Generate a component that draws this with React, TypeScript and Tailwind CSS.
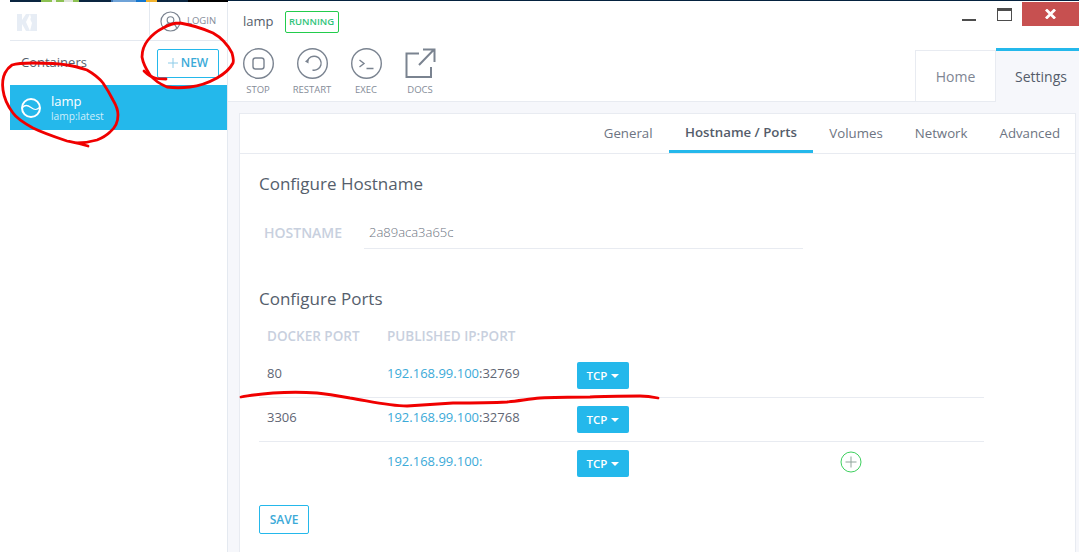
const font = { fontFamily: '"Open Sans", sans-serif' };

function Tcp() {
  return (
    <button className="flex h-[27px] w-[52px] items-center justify-center gap-[4px] rounded-[2px] bg-[#24b8eb] text-[11.5px] font-semibold text-white">
      TCP
      <span className="h-0 w-0 border-x-[4px] border-t-[4px] border-x-transparent border-t-white" />
    </button>
  );
}

function Row({ port, ip, last, plus }: { port: string; ip: string; last?: boolean; plus?: boolean }) {
  return (
    <div className={`flex h-[44px] items-start pl-[8px] pt-[8px] ${last ? "" : "border-b border-[#e8ebf1]"}`}>
      <div className="w-[120px] pt-[2px] text-[13px] leading-[18px] text-[#5f6674]">{port}</div>
      <div className="w-[190px] pt-[2px] text-[13px] leading-[18px] text-[#5f6674]">
        <span className="text-[#3baad8]">192.168.99.100</span>
        <span className={port ? "" : "text-[#3baad8]"}>:{ip}</span>
      </div>
      <Tcp />
      {plus && (
        <svg className="ml-[211px] mt-[1px]" width="22" height="22" viewBox="0 0 22 22" fill="none">
          <circle cx="11" cy="11" r="10" stroke="#3fd05f" />
          <path d="M11 5.5v11M5.500 11h11" stroke="#8fa39a" />
        </svg>
      )}
    </div>
  );
}

function Action({ label, children }: { label: string; children: React.ReactNode }) {
  return (
    <div className="flex w-[54px] flex-col items-center">
      <svg width="31" height="31" viewBox="0 0 31 31" fill="none" stroke="#7a8390" strokeWidth="1.4">
        {children}
      </svg>
      <span className="mt-[4px] text-[9.5px] leading-[14px] text-[#858c98]">{label}</span>
    </div>
  );
}

export default function App() {
  return (
    <div style={font} className="relative h-[552px] w-[1079px] overflow-hidden bg-white">
      <div className="flex h-[2px] items-start">
        <div className="ml-[10px] h-full w-[31px] bg-[#0a2540]" />
        <div className="h-full w-[11px] bg-[#8cc152]" />
        <div className="h-full w-[4px] bg-[#eef0e8]" />
        <div className="h-full w-[8px] bg-[#8cc152]" />
        <div className="h-full w-[9px] bg-[#dfe3da]" />
        <div className="h-full w-[6px] bg-[#8cc152]" />
        <div className="h-full w-[32px] bg-[#0a2540]" />
        <div className="h-full w-[2px] bg-[#3f78b5]" />
        <div className="h-full w-[23px] bg-[#6fa3d8]" />
        <div className="h-full w-[10px] bg-[#1577cf]" />
        <div className="h-full w-[11px] bg-[#f2b32e]" />
        <div className="h-full w-[31px] bg-[#0a2540]" />
        <div className="h-full w-[40px] bg-[#000000]" />
        <div className="h-[1px] flex-1 bg-[#05223f]" />
      </div>
      <div className="flex h-[550px]">
        {/* Sidebar */}
        <aside className="flex w-[228px] shrink-0 flex-col border-r border-[#e4e9f0]">
          <div className="ml-[10px] flex h-[39px] items-center justify-between border-b border-[#e4e9f0]">
            <svg className="ml-[7px] mt-[2px]" width="20" height="17" viewBox="0 0 20 17" fill="#e7edf5">
              <path d="M0 0h5v6l4-6h4l-4 8 4 9H9L5 10v7H0z" />
              <path d="M13 0h7v17h-7l1.500-6 .5-2-1-2c-.5-1-1-2 0-3.500z" />
            </svg>
            <div className="flex h-full w-[78px] items-center gap-[6px] border-l border-[#e4e9f0] pl-[10px]">
              <svg width="21" height="21" viewBox="0 0 22 22" fill="none" stroke="#7a8390" strokeWidth="1.2">
                <circle cx="11" cy="11" r="10" />
                <circle cx="11" cy="9.500" r="3.500" />
                <path d="M4.500 18c1-3.500 3.500-5 6.500-5s5.500 1.500 6.500 5" />
              </svg>
              <span className="mt-[1px] text-[9.5px] text-[#858c98]">LOGIN</span>
            </div>
          </div>
          <div className="flex h-[44px] items-center justify-between pl-[21px] pr-[8px]">
            <span className="-mt-[1px] text-[13px] text-[#555e6c]">Containers</span>
            <button className="flex h-[29px] w-[62px] items-center justify-center gap-[3px] rounded-[2px] border border-[#24b8eb] text-[12px] font-semibold text-[#3baad8]">
              <svg width="10" height="10" viewBox="0 0 10 10" stroke="#8ccbe8" strokeWidth="1">
                <path d="M5 0v10M0 5h10" />
              </svg>
              NEW
            </button>
          </div>
          <div className="ml-[10px] flex h-[45px] items-center bg-[#24b8eb] pl-[11px] text-white">
            <svg width="20" height="20" viewBox="0 0 20 20" fill="none" stroke="white" strokeWidth="2">
              <circle cx="10" cy="10" r="9" />
              <path d="M1.500 9.500c2-2.500 4.500-3 8.500 0s6 2.500 8.500 0" strokeWidth="1.300" />
            </svg>
            <div className="ml-[10px] flex flex-col">
              <span className="text-[13px] font-medium leading-[17px]">lamp</span>
              <span className="text-[10.2px] leading-[13px] text-[#d0eefa]">lamp:latest</span>
            </div>
          </div>
        </aside>

        {/* Main */}
        <main className="flex min-w-0 flex-1 flex-col bg-[#f6f7fb]">
          <header className="flex h-[100px] shrink-0 justify-between border-b border-[#e8ebf1] bg-white">
            <div className="pl-[15px]">
              <div className="flex h-[38px] items-center gap-[11px] pt-[2px]">
                <span className="text-[13px] font-medium text-[#545c6a]">lamp</span>
                <span className="flex h-[22px] w-[54px] items-center justify-center rounded-[2px] border border-[#22cc4c] text-[9.500px] font-semibold text-[#2fc47a]">
                  RUNNING
                </span>
              </div>
              <div className="-ml-[12px] mt-[8px] flex">
                <Action label="STOP">
                  <circle cx="15.500" cy="15.500" r="14.800" />
                  <rect x="10" y="10" width="11" height="11" rx="2.500" />
                </Action>
                <Action label="RESTART">
                  <circle cx="15.500" cy="15.500" r="14.800" />
                  <path d="M10.500 13a7 7 0 1 1 5 9" />
                  <path d="M8 13.500l3.500-3v5z" fill="#7a8390" stroke="none" />
                </Action>
                <Action label="EXEC">
                  <circle cx="15.500" cy="15.500" r="14.800" />
                  <path d="M8.500 12l4.500 3.500L8.500 19M15.500 20.500h7" />
                </Action>
                <Action label="DOCS">
                  <path d="M14 5.500H1.500V29H26V19" strokeWidth="2" />
                  <path d="M14 17L29 1.500M18 1.500H29.500V14" strokeWidth="2" />
                </Action>
              </div>
            </div>
            <div className="flex flex-col items-end">
              <div className="flex">
                <div className="flex h-[20px] items-end pr-[5px]">
                  <span className="mb-[1px] block h-[2px] w-[14px] bg-[#4d4d4d]" />
                </div>
                <div className="ml-[16px] mt-[6px] h-[13px] w-[15px] border border-t-[3px] border-[#4d4d4d]" />
                <div className="ml-[10px] flex h-[24px] w-[57px] items-center justify-center bg-[#c75050]">
                  <svg width="11" height="10" viewBox="0 0 11 10" stroke="white" strokeWidth="2.800">
                    <path d="M1 .5l9 9M10 .5l-9 9" />
                  </svg>
                </div>
              </div>
              <div className="mt-[24px] flex self-stretch">
                <div className="flex h-[52px] w-[81px] items-center justify-center border-x border-t border-[#e8ebf1] text-[14px] font-medium text-[#7e8593]">
                  Home
                </div>
                <div className="-mt-[2px] flex h-[54px] w-[83px] items-center justify-center border-t-[3px] border-[#24b8eb] bg-[#f6f7fb] pl-[7px] text-[14px] font-medium text-[#545c6a]">
                  Settings
                </div>
              </div>
            </div>
          </header>

          <section className="ml-[11px] mr-[3px] mt-[11px] flex-1 border border-b-0 border-[#e8ebf1] bg-white">
            <nav className="-mr-[1px] flex h-[40px] justify-end border-b border-[#e8ebf1] text-[13.25px] text-[#6d7482]">
              <span className="flex items-center px-[16px]">General</span>
              <span className="flex items-center border-b-[3px] border-[#24b8eb] px-[16.5px] pt-[2px] font-semibold text-[#545c6a]">
                Hostname / Ports
              </span>
              <span className="flex items-center px-[16px]">Volumes</span>
              <span className="flex items-center px-[16px]">Network</span>
              <span className="flex items-center px-[16px]">Advanced</span>
            </nav>
            <div className="pl-[19px] pr-[91px]">
              <h2 className="mt-[19px] text-[17px] leading-[22px] text-[#555e6c]">Configure Hostname</h2>
              <div className="mt-[22px] flex h-[32px] w-[544px] items-stretch pl-[5px]">
                <span className="flex w-[100px] items-center pb-[1px] text-[14px] font-semibold text-[#c8d0de]">HOSTNAME</span>
                <span className="flex flex-1 items-center border-b border-[#e8ebf1] pl-[5px] text-[13px] font-light text-[#6d7482]">
                  2a89aca3a65c
                </span>
              </div>
              <h2 className="mt-[39px] text-[17px] leading-[22px] text-[#555e6c]">Configure Ports</h2>
              <div className="mt-[17px] flex pl-[8px] text-[13.5px] font-semibold leading-[18px] text-[#c8d0de]">
                <span className="w-[120px]">DOCKER PORT</span>
                <span>PUBLISHED IP:PORT</span>
              </div>
              <div className="mt-[9px]">
                <Row port="80" ip="32769" />
                <Row port="3306" ip="32768" />
                <Row port="" ip="" last plus />
              </div>
              <button className="mt-[19px] h-[29px] w-[50px] rounded-[2px] border border-[#24b8eb] text-[12px] font-semibold text-[#3baad8]">
                SAVE
              </button>
            </div>
          </section>
        </main>
      </div>

      {/* Hand-drawn annotations */}
      <svg className="pointer-events-none absolute inset-0" width="1079" height="552" fill="none" stroke="#f00000" strokeWidth="2.800" strokeLinecap="round" strokeLinejoin="round">
        <path d="M88 146C78 143 72 142 67 141C55 137 43 133 33 128C24 123 17 119 13 113C7 105 4 98 3 90C2 83 3 77 5 73C7 69 9 67 12 65C18 63 25 63 33 63C44 63 56 63 67 65C75 66 81 68 87 70C94 74 99 78 103 83C107 89 110 94 113 100C116 105 118 110 118 115C118 122 115 128 110 132C106 136 102 138 97 140C90 142 84 143 77 143" />
        <path d="M180 23C192 25 204 29 213 33C222 38 228 45 232 53C233 57 234 60 233 63C230 69 224 74 217 78C208 83 199 86 190 87C182 88 174 88 167 87C160 84 154 80 150 75C146 69 143 63 142 57C142 50 144 45 148 40C152 35 157 31 163 28C168 25 174 23 180 23" />
        <path d="M144 71C147 74 151 77 155 78C158 79 162 79 166 79" />
        <path d="M241 397C251 395 262 394 273 393C288 392 303 392 317 393C328 394 339 396 350 398C369 401 388 406 407 406C422 405 438 404 453 403C471 403 489 403 507 402C518 401 529 399 540 398C557 397 573 397 590 397C607 396 623 396 640 396C647 396 653 397 658 398" />
      </svg>
    </div>
  );
}
